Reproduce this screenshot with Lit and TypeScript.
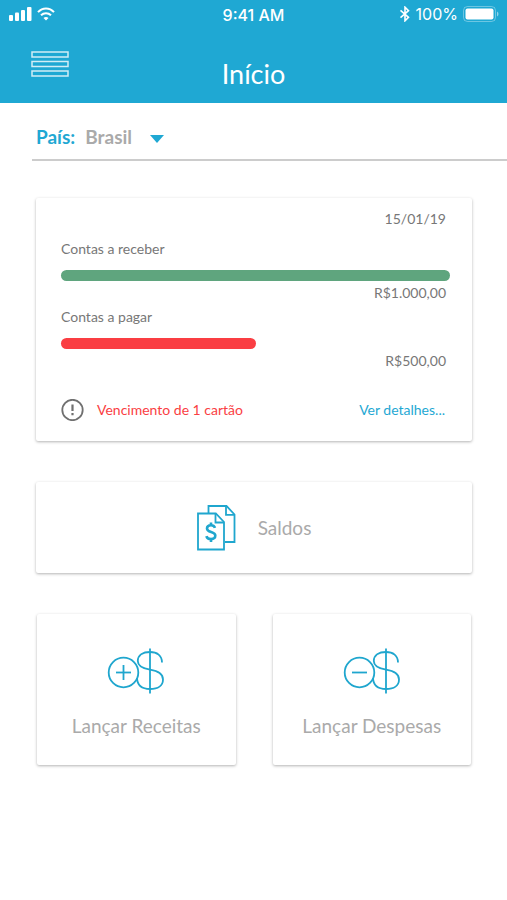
import { LitElement, html, css, svg } from "lit";
import { customElement, property } from "lit/decorators.js";
import { styleMap } from "lit/directives/style-map.js";

@customElement("status-bar")
export class StatusBar extends LitElement {
  static styles = css`
    :host {
      display: grid;
      grid-template-columns: 1fr auto 1fr;
      align-items: center;
      height: 30px;
      padding: 0 8px;
      color: #fff;
      font: 500 16px/18px Inter, sans-serif;
    }
    .side {
      display: flex;
      align-items: center;
      gap: 5px;
      margin-bottom: 2px;
    }
    .end {
      justify-content: flex-end;
    }
    .level {
      font: 400 16px/18px Inter, sans-serif;
    }
    svg {
      display: block;
      flex: none;
    }
  `;
  render() {
    return html`
      <div class="side">
        <svg width="24" height="14" viewBox="0 0 24 14" fill="#fff" aria-hidden="true">
          <rect x="1" y="8" width="4" height="6" rx="1" />
          <rect x="7" y="5.500" width="4" height="8.500" rx="1" />
          <rect x="13" y="3" width="4" height="11" rx="1" />
          <rect x="19" y="0" width="4.500" height="14" rx="1" />
        </svg>
        <svg width="18" height="14" viewBox="0 0 18 14" aria-hidden="true">
          <g fill="none" stroke="#fff" stroke-width="2">
            <path d="M1 5.200C5.500.200 12.500.200 17 5.200" />
            <path d="M4 8.300c2.900-2.900 7.100-2.900 10 0" />
          </g>
          <path d="M9 13.500 6.500 11c1.400-1.300 3.600-1.300 5 0z" fill="#fff" />
        </svg>
      </div>
      <span>9:41 AM</span>
      <div class="side end">
        <svg width="14" height="16" viewBox="0 0 14 16" fill="none" stroke="#fff" stroke-width="1.600" aria-hidden="true">
          <path d="M3.500 4.300 11.500 11.300 8 14.800V1.200l3.500 3.500-8 7" />
        </svg>
        <span class="level">100%</span>
        <svg width="36" height="16" viewBox="0 0 36 16" aria-hidden="true">
          <rect x=".500" y=".500" width="32" height="15" rx="4" fill="none" stroke="#fff" stroke-opacity=".35" />
          <rect x="2.500" y="2.500" width="28" height="11" rx="2" fill="#fff" />
          <path d="M34 5.500v5c2-1 2-4 0-5z" fill="#fff" fill-opacity=".5" />
        </svg>
      </div>
    `;
  }
}

@customElement("account-bar")
export class AccountBar extends LitElement {
  @property() label = "";
  @property() amount = "";
  @property({ type: Number }) share = 100;
  @property() tone = "";

  static styles = css`
    :host {
      display: flex;
      flex-direction: column;
      color: #777;
      font: 400 14px/18px Lato, sans-serif;
    }
    .bar {
      height: 11px;
      margin: 12px 0 3px;
      border-radius: 6px;
    }
    .amount {
      align-self: flex-end;
      padding-right: 4px;
    }
  `;
  render() {
    return html`
      <span>${this.label}</span>
      <div class="bar" style=${styleMap({ width: `${this.share}%`, background: this.tone })}></div>
      <span class="amount">${this.amount}</span>
    `;
  }
}

const entryIcon = (plus: boolean) => html`
  <svg width="58" height="46" viewBox="0 0 58 46" fill="none" stroke="#1fa6ce" stroke-width="1.800" aria-hidden="true">
    <circle cx="16.500" cy="24.500" r="14.800" />
    <path d="M9 24.500h15" />
    ${plus ? svg`<path d="M16.500 17v15" />` : null}
    <path d="M43 .500v45" />
    <path d="M55 14.500C55 7.500 50 4 43 4S30.800 7 30.800 13c0 5 3.700 7.300 12.200 8.700 9 1.400 13 4.300 13 9.800 0 6-5 9.500-13 9.500S30.300 37.500 30 30" />
  </svg>
`;

@customElement("app-root")
export class AppRoot extends LitElement {
  static styles = css`
    :host {
      display: block;
      min-height: 100vh;
      background: #fff;
      color: #777;
      font: 400 14px/18px Lato, sans-serif;
    }
    svg {
      display: block;
      flex: none;
    }
    button {
      border: 0;
      padding: 0;
      background: none;
      color: inherit;
      font: inherit;
      cursor: pointer;
    }
    .header {
      background: #1fa8d3;
      color: #fff;
    }
    .nav {
      display: grid;
      grid-template-columns: 1fr auto 1fr;
      align-items: center;
      height: 73px;
      padding: 0 31px;
    }
    .menu {
      justify-self: start;
      margin-bottom: 6px;
    }
    .title {
      margin: 14px 0 0;
      font: 400 27px/32px Lato, sans-serif;
    }
    .country {
      display: flex;
      align-items: center;
      gap: 10px;
      height: 44px;
      margin-left: 32px;
      padding: 12px 4px 0;
      border-bottom: 2px solid #ccc;
      font: 700 19px/24px Lato, sans-serif;
      color: #1fa8d3;
    }
    .picker {
      display: grid;
      align-items: center;
    }
    .picker > * {
      grid-area: 1 / 1;
    }
    .picker svg {
      justify-self: end;
      pointer-events: none;
      margin-top: 4px;
    }
    select {
      appearance: none;
      border: 0;
      margin: 0;
      padding: 0 32px 0 0;
      background: none;
      color: #aaa;
      font: inherit;
    }
    .main {
      display: grid;
      gap: 41px;
      padding: 37px 35px 37px 36px;
    }
    .card {
      border-radius: 2px;
      background: #fff;
      box-shadow: 0 1px 3px rgba(0, 0, 0, 0.3);
    }
    .summary {
      display: flex;
      flex-direction: column;
      padding: 12px 22px 20px 25px;
    }
    .date {
      align-self: flex-end;
      margin-bottom: 12px;
      padding-right: 4px;
    }
    .second {
      margin-top: 6px;
    }
    .notice {
      display: flex;
      align-items: center;
      gap: 13px;
      margin-top: 29px;
      padding-right: 5px;
      color: #fa3e43;
    }
    .more {
      margin-left: auto;
      color: #1fa8d3;
      text-decoration: none;
    }
    .action {
      display: flex;
      align-items: center;
      justify-content: center;
      color: #aaa;
      font: 400 19px/24px Lato, sans-serif;
    }
    .balances {
      gap: 21px;
      height: 91px;
    }
    .entries {
      display: grid;
      grid-template-columns: 1fr 1fr;
      gap: 37px;
      padding: 0 1px;
    }
    .entry {
      flex-direction: column;
      gap: 20px;
      height: 151px;
      padding-top: 6px;
    }
  `;
  render() {
    return html`
      <header class="header">
        <status-bar></status-bar>
        <div class="nav">
          <button class="menu" aria-label="Menu">
            <svg width="38" height="26" viewBox="0 0 38 26" fill="none" stroke="#fff" stroke-opacity=".8" stroke-width="1.500">
              <rect x="1" y="1" width="36" height="5" />
              <rect x="1" y="10.500" width="36" height="5" />
              <rect x="1" y="20" width="36" height="5" />
            </svg>
          </button>
          <h1 class="title">Início</h1>
        </div>
      </header>
      <div class="country">
        <label for="country">País:</label>
        <div class="picker">
          <select id="country">
            <option>Brasil</option>
          </select>
          <svg width="14" height="8" viewBox="0 0 14 8" fill="#1fa8d3" aria-hidden="true"><path d="M0 0h14L7 8z" /></svg>
        </div>
      </div>
      <main class="main">
        <section class="card summary">
          <span class="date">15/01/19</span>
          <account-bar label="Contas a receber" amount="R$1.000,00" share="100" tone="#5fa57e"></account-bar>
          <account-bar class="second" label="Contas a pagar" amount="R$500,00" share="50" tone="#fa3e43"></account-bar>
          <div class="notice">
            <svg width="23" height="22" viewBox="0 0 23 22" fill="none" stroke="#707070" stroke-width="1.800" aria-hidden="true">
              <circle cx="11.500" cy="11" r="10.200" />
              <path d="M11.500 5.500v6.500M11.500 14v2.200" stroke-width="2.200" />
            </svg>
            <span>Vencimento de 1 cartão</span>
            <a class="more" href="#detalhes">Ver detalhes...</a>
          </div>
        </section>
        <button class="card action balances">
          <svg width="40" height="46" viewBox="0 0 40 46" fill="none" stroke="#1fa6ce" stroke-width="1.800" aria-hidden="true">
            <path d="M11.500 8V1h18l8 8.500V37H28" />
            <path d="M29 1v8.800h8.500" />
            <path d="M1 8.500h17.800l8.200 8.500v27.500H1z" />
            <path d="M18.500 8.500v9H27" />
            <path d="M18 22.800c-.600-1.800-2-2.600-4-2.600-2.300 0-4 1.200-4 3.200 0 4.600 8.300 2.500 8.300 7.200 0 2.200-1.800 3.500-4.300 3.500-2.400 0-4.100-1-4.600-3M14 17.500v3M14 34v3" stroke-width="2.600" />
          </svg>
          <span>Saldos</span>
        </button>
        <div class="entries">
          <button class="card action entry">${entryIcon(true)}<span>Lançar Receitas</span></button>
          <button class="card action entry">${entryIcon(false)}<span>Lançar Despesas</span></button>
        </div>
      </main>
    `;
  }
}
